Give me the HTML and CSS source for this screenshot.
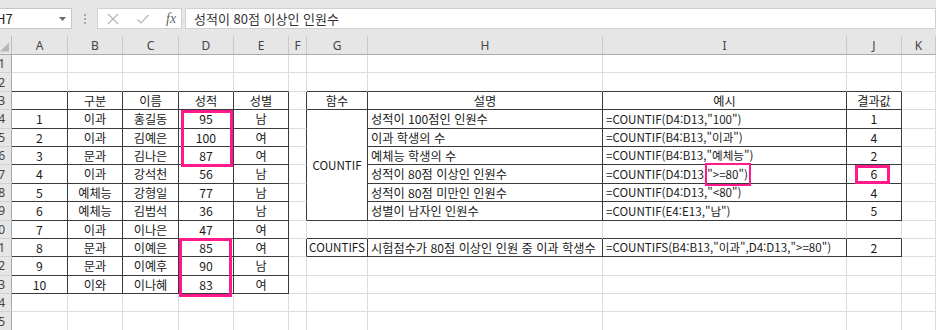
FILE: index.html
```html
<!DOCTYPE html>
<html lang="ko">
<head>
<meta charset="utf-8">
<title>COUNTIF</title>
<link rel="stylesheet" href="styles.css">
</head>
<body>
<div class="topbar">
  <div class="namebox"><span class="nb-text">H7</span><svg class="nb-arrow" width="7" height="4" viewBox="0 0 7 4"><path d="M0 0H7L3.5 4Z" fill="#6a6a6a"/></svg></div>
  <div class="sep"><i></i><i></i><i></i></div>
  <div class="fxbox">
    <svg class="ic" width="14" height="14" viewBox="0 0 14 14"><path d="M2 2L12 12M12 2L2 12" stroke="#b4b4b4" stroke-width="1.2" fill="none"/></svg>
    <svg class="ic" width="14" height="14" viewBox="0 0 14 14"><path d="M1.5 7.5L5 11L12.5 3" stroke="#b4b4b4" stroke-width="1.2" fill="none"/></svg>
    <span class="fx">fx</span>
  </div>
  <div class="formula">성적이 80점 이상인 인원수</div>
</div>
<div class="sheet">
  <div class="corner"><svg width="10" height="10" viewBox="0 0 10 10"><path d="M10 0V10H0Z" fill="#b7b7b7"/></svg></div>
  <div class="ch">A</div><div class="ch">B</div><div class="ch">C</div><div class="ch">D</div><div class="ch">E</div><div class="ch">F</div><div class="ch">G</div><div class="ch">H</div><div class="ch">I</div><div class="ch">J</div><div class="ch">K</div>

  <div class="rh">1</div>
  <div class="c"></div><div class="c"></div><div class="c"></div><div class="c"></div><div class="c"></div><div class="c"></div><div class="c"></div><div class="c"></div><div class="c"></div><div class="c"></div><div class="c"></div>

  <div class="rh">2</div>
  <div class="c bb"></div><div class="c bb"></div><div class="c bb"></div><div class="c bb"></div><div class="c bb"></div><div class="c"></div><div class="c bb"></div><div class="c bb"></div><div class="c bb"></div><div class="c bb"></div><div class="c"></div>

  <div class="rh">3</div>
  <div class="c t"></div><div class="c t">구분</div><div class="c t">이름</div><div class="c t">성적</div><div class="c t">성별</div><div class="c br"></div><div class="c t">함수</div><div class="c t">설명</div><div class="c t">예시</div><div class="c t">결과값</div><div class="c"></div>

  <div class="rh">4</div>
  <div class="c t">1</div><div class="c t">이과</div><div class="c t">홍길동</div><div class="c t rel">95<span class="hl hl-top"></span></div><div class="c t">남</div><div class="c br"></div><div class="c t merged lat">COUNTIF</div><div class="c t l">성적이 100점인 인원수</div><div class="c t l lat">=COUNTIF(D4:D13,"100")</div><div class="c t">1</div><div class="c"></div>

  <div class="rh">5</div>
  <div class="c t">2</div><div class="c t">이과</div><div class="c t">김예은</div><div class="c t">100</div><div class="c t">여</div><div class="c br"></div><div class="c t l">이과 학생의 수</div><div class="c t l lat">=COUNTIF(B4:B13,"이과")</div><div class="c t">4</div><div class="c"></div>

  <div class="rh">6</div>
  <div class="c t">3</div><div class="c t">문과</div><div class="c t">김나은</div><div class="c t">87</div><div class="c t">여</div><div class="c br"></div><div class="c t l">예체능 학생의 수</div><div class="c t l lat">=COUNTIF(B4:B13,"예체능")</div><div class="c t">2</div><div class="c"></div>

  <div class="rh">7</div>
  <div class="c t">4</div><div class="c t">이과</div><div class="c t">강석천</div><div class="c t">56</div><div class="c t">남</div><div class="c br"></div><div class="c t l">성적이 80점 이상인 인원수</div><div class="c t l lat">=COUNTIF(D4:D13,<span class="crit">"&gt;=80")<span class="hl hl-crit"></span></span></div><div class="c t rel">6<span class="hl hl-res"></span></div><div class="c"></div>

  <div class="rh">8</div>
  <div class="c t">5</div><div class="c t">예체능</div><div class="c t">강형일</div><div class="c t">77</div><div class="c t">남</div><div class="c br"></div><div class="c t l">성적이 80점 미만인 인원수</div><div class="c t l lat">=COUNTIF(D4:D13,"&lt;80")</div><div class="c t">4</div><div class="c"></div>

  <div class="rh">9</div>
  <div class="c t">6</div><div class="c t">예체능</div><div class="c t">김범석</div><div class="c t">36</div><div class="c t">남</div><div class="c br"></div><div class="c t l">성별이 남자인 인원수</div><div class="c t l lat">=COUNTIF(E4:E13,"남")</div><div class="c t">5</div><div class="c"></div>

  <div class="rh">10</div>
  <div class="c t">7</div><div class="c t">이과</div><div class="c t">이나은</div><div class="c t">47</div><div class="c t">여</div><div class="c"></div><div class="c bb"></div><div class="c bb"></div><div class="c bb"></div><div class="c bb"></div><div class="c"></div>

  <div class="rh">11</div>
  <div class="c t">8</div><div class="c t">문과</div><div class="c t">이예은</div><div class="c t rel">85<span class="hl hl-bot"></span></div><div class="c t">여</div><div class="c br"></div><div class="c t lat">COUNTIFS</div><div class="c t l">시험점수가 80점 이상인 인원 중 이과 학생수</div><div class="c t l lat">=COUNTIFS(B4:B13,"이과",D4:D13,"&gt;=80")</div><div class="c t">2</div><div class="c"></div>

  <div class="rh">12</div>
  <div class="c t">9</div><div class="c t">문과</div><div class="c t">이예후</div><div class="c t">90</div><div class="c t">남</div><div class="c"></div><div class="c"></div><div class="c"></div><div class="c"></div><div class="c"></div><div class="c"></div>

  <div class="rh">13</div>
  <div class="c t">10</div><div class="c t">이와</div><div class="c t">이나혜</div><div class="c t">83</div><div class="c t">여</div><div class="c"></div><div class="c"></div><div class="c"></div><div class="c"></div><div class="c"></div><div class="c"></div>

  <div class="rh">14</div>
  <div class="c"></div><div class="c"></div><div class="c"></div><div class="c"></div><div class="c"></div><div class="c"></div><div class="c"></div><div class="c"></div><div class="c"></div><div class="c"></div><div class="c"></div>

  <div class="rh">15</div>
  <div class="c"></div><div class="c"></div><div class="c"></div><div class="c"></div><div class="c"></div><div class="c"></div><div class="c"></div><div class="c"></div><div class="c"></div><div class="c"></div><div class="c"></div>
</div>
</body>
</html>
```
FILE: styles.css
```css
* { box-sizing: border-box; margin: 0; padding: 0; }
body {
  margin: 0;
  width: 936px;
  height: 330px;
  overflow: hidden;
  background: #fff;
  font-family: "Noto Sans CJK KR", "Noto Sans", sans-serif;
  font-size: 12.2px;
  color: #1a1a1a;
}
.topbar {
  height: 36px;
  background: #e6e6e6;
  display: flex;
  align-items: flex-start;
  padding-top: 8px;
  overflow: hidden;
}
.namebox {
  flex: none;
  width: 81px;
  margin-left: -9px;
  height: 21px;
  background: #fff;
  border: 1px solid #c6c6c6;
  display: flex;
  align-items: center;
  justify-content: space-between;
  padding: 0 5px 0 4px;
  font-size: 13px;
  color: #222;
}
.sep {
  flex: none;
  width: 25px;
  height: 21px;
  display: flex;
  flex-direction: column;
  align-items: center;
  justify-content: center;
  gap: 2px;
}
.sep i { width: 2px; height: 2px; background: #a8a8a8; display: block; }
.fxbox {
  flex: none;
  width: 85px;
  height: 21px;
  background: #fff;
  border: 1px solid #d0d0d0;
  display: flex;
  align-items: center;
  gap: 16px;
  padding-left: 8px;
}
.fx {
  font-family: "Liberation Serif", serif;
  font-style: italic;
  font-size: 14px;
  color: #666;
}
.formula {
  flex: 1;
  margin-left: 3px;
  height: 21px;
  background: #fff;
  border: 1px solid #d0d0d0;
  padding-left: 8px;
  line-height: 19px;
  font-size: 13px;
  color: #333;
}
.sheet {
  display: grid;
  grid-template-columns: 12px 56px 55px 56px 55px 55px 18px 61px 235px 244px 55px 1fr;
  grid-template-rows: 19px repeat(15, 18.4px);
}
.corner {
  background: #e6e6e6;
  border-right: 1px solid #bdbdbd;
  border-bottom: 1px solid #ababab;
  display: flex;
  align-items: flex-end;
  justify-content: flex-end;
  padding: 0 2px 2px 0;
}
.ch {
  background: #e6e6e6;
  border-right: 1px solid #c8c8c8;
  border-bottom: 1px solid #ababab;
  font-family: "Noto Sans", sans-serif;
  font-size: 12px;
  color: #444;
  display: flex;
  align-items: center;
  justify-content: center;
}
.rh {
  background: #e6e6e6;
  border-right: 1px solid #ababab;
  border-bottom: 1px solid #d0d0d0;
  font-family: "Noto Sans", sans-serif;
  font-size: 12px;
  color: #444;
  display: flex;
  align-items: center;
  justify-content: flex-end;
  padding-right: 6px;
  overflow: hidden;
  white-space: nowrap;
}
.c {
  border-right: 1px solid #dcdcdc;
  border-bottom: 1px solid #dcdcdc;
  display: flex;
  align-items: center;
  justify-content: center;
  white-space: nowrap;
  line-height: 1;
  padding-top: 1px;
}
.c.lat { font-size: 11.6px; }
.c.l { justify-content: flex-start; padding-left: 3px; }
.c.t { border-right-color: #3a3a3a; border-bottom-color: #3a3a3a; }
.c.br { border-right-color: #3a3a3a; }
.c.bb { border-bottom-color: #3a3a3a; }
.merged { grid-row: span 6; }
.rel, .crit { position: relative; }
.hl {
  position: absolute;
  border: 3px solid #ff1a8c;
  pointer-events: none;
}
.hl-top { left: 2px; right: 0; top: 0; height: 57px; }
.hl-bot { left: 0; right: 1px; top: -1px; height: 59px; }
.hl-crit { left: -2px; right: -3px; top: -6px; bottom: -6px; border-width: 2px; }
.hl-res { left: 8px; width: 35px; top: 0; bottom: -1px; }
```
